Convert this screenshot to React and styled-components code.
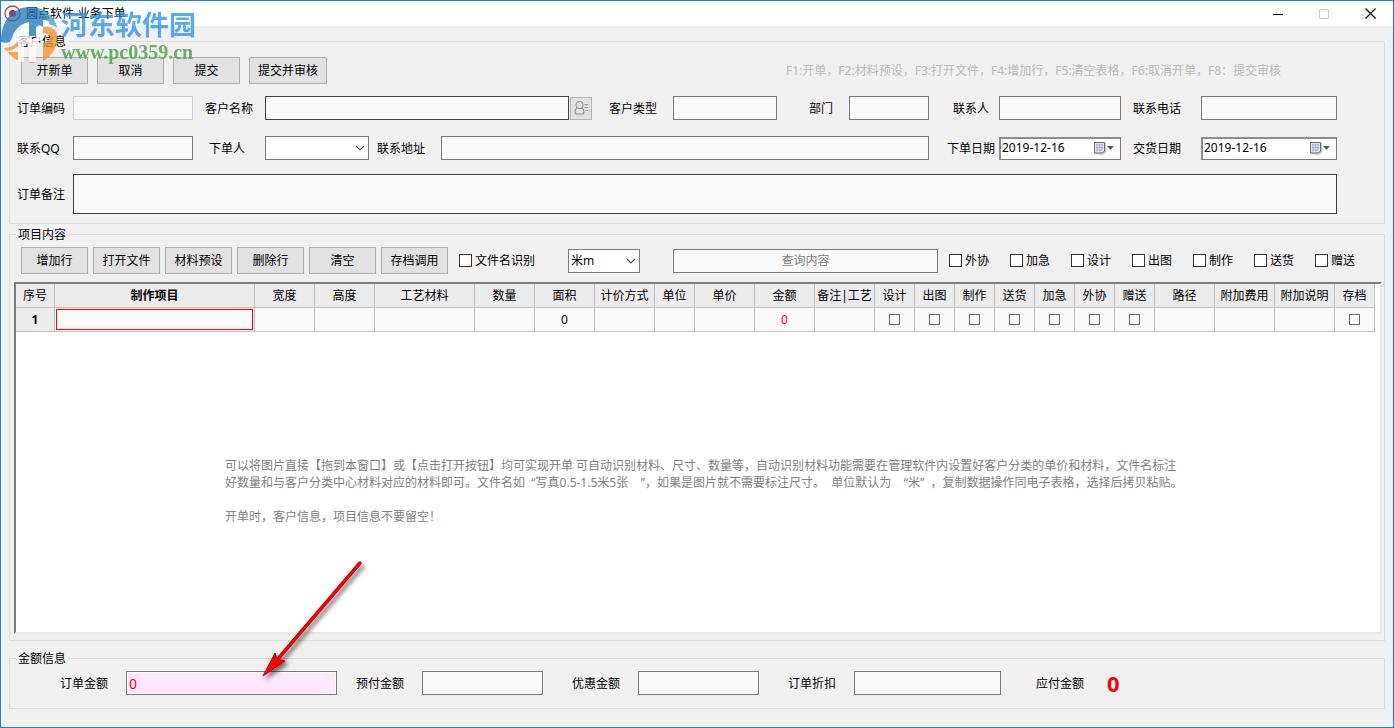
import React from 'react';
import styled, { createGlobalStyle, css } from 'styled-components';

const GlobalStyle = createGlobalStyle`
  *, *::before, *::after { box-sizing: border-box; }
  body { margin: 0; }
  body, button, input, select, textarea {
    font-family: "Noto Sans", "Noto Sans CJK SC", sans-serif;
    font-size: 12px;
    line-height: 17px;
    color: #000;
  }
  p { margin: 0; }
`;

const AppWindow = styled.div`
  position: relative;
  display: flex;
  flex-direction: column;
  min-width: 1240px;
  min-height: 100vh;
  border: 1px solid #1883d7;
  background: #f0f0f0;
`;

const TitleBar = styled.header`
  display: flex;
  align-items: center;
  height: 25px;
  padding-left: 3px;
  background: #fff;
`;

const TitleText = styled.h1`
  flex: 1;
  margin: 0 0 0 5px;
  font-size: 12px;
  font-weight: 400;
`;

const CaptionButton = styled.button`
  display: flex;
  align-items: center;
  justify-content: center;
  width: 46px;
  height: 25px;
  padding: 0;
  border: 0;
  background: transparent;
`;

const Content = styled.main`
  display: flex;
  flex: 1;
  flex-direction: column;
  padding: 7px 8px 18px;
`;

const Group = styled.fieldset`
  display: flex;
  flex-direction: column;
  flex: ${(p) => (p.$grow ? '1' : 'none')};
  min-width: 0;
  margin: 0 0 ${(p) => p.$after || 0}px;
  padding: ${(p) => p.$pad};
  border: 1px solid #dcdcdc;
`;

const GroupTitle = styled.legend`
  margin-left: ${(p) => p.$indent}px;
  padding: 0 2px;
  line-height: 17px;
`;

const ButtonBar = styled.div`
  display: flex;
  align-items: center;
  gap: ${(p) => p.$gap}px;
  padding-left: ${(p) => p.$indent}px;
`;

const PushButton = styled.button`
  width: ${(p) => (p.$wide ? 78 : 67)}px;
  height: 27px;
  padding: 0;
  border: 1px solid #adadad;
  background: #e1e1e1;
  white-space: nowrap;
`;

const ShortcutHint = styled.p`
  margin-left: auto;
  padding-right: 56px;
  color: #b8b8b8;
  white-space: nowrap;
`;

const FormGrid = styled.div`
  display: grid;
  grid-template-columns: 176px minmax(200px, 1fr) 173px 140px 180px 204px;
  column-gap: 12px;
  row-gap: 16px;
  margin-top: 12px;
`;

const FieldBox = styled.div`
  display: flex;
  align-items: center;
  min-width: 0;
  flex: ${(p) => (p.$grow ? '1' : 'none')};
  grid-column: ${(p) => p.$span || 'auto'};
  margin-right: ${(p) => p.$after || 0}px;
`;

const FieldLabel = styled.label`
  flex: none;
  width: ${(p) => p.$w}px;
  padding-right: ${(p) => p.$gap || 0}px;
  text-align: ${(p) => (p.$gap ? 'right' : 'left')};
  white-space: nowrap;
`;

const toneColors = { normal: '#7a7a7a', strong: '#404040', off: '#cccccc' };

const TextInput = styled.input`
  flex: ${(p) => (p.$w ? 'none' : '1')};
  width: ${(p) => (p.$w ? p.$w + 'px' : 'auto')};
  min-width: 0;
  height: 24px;
  padding: 0 2px;
  border: 1px solid ${(p) => toneColors[p.$tone || 'normal']};
  border-radius: 0;
  background: #f9f9f9;
  outline: 0;
  text-align: ${(p) => (p.$center ? 'center' : 'left')};
  &::placeholder { color: #808080; opacity: 1; }
  ${(p) => p.$amount && css`
    background: #ffe6ff;
    box-shadow: inset 0 0 0 1px #fff;
    color: #f00;
    font-size: 14px;
  `}
`;

const RemarkRow = styled.div`
  display: flex;
  align-items: center;
  margin-top: 14px;
`;

const RemarkArea = styled.textarea`
  display: block;
  flex: 1;
  height: 40px;
  padding: 2px;
  border: 1px solid #404040;
  border-radius: 0;
  background: #f9f9f9;
  outline: 0;
  resize: none;
`;

const LookupButton = styled.button`
  display: flex;
  align-items: center;
  justify-content: center;
  width: 22px;
  height: 23px;
  margin-left: 1px;
  padding: 0;
  border: 1px solid #b4b4b4;
  background: #e1e1e1;
`;

const SelectBox = styled.div`
  position: relative;
  flex: none;
  width: ${(p) => p.$w}px;
  height: 24px;
  svg {
    position: absolute;
    right: 4px;
    top: 9px;
    pointer-events: none;
  }
`;

const SelectControl = styled.select`
  width: 100%;
  height: 100%;
  padding: 0 2px;
  border: 1px solid #7a7a7a;
  border-radius: 0;
  background: #fff;
  outline: 0;
  appearance: none;
`;

const DateBox = styled.div`
  display: flex;
  align-items: center;
  flex: 1;
  min-width: 0;
  height: 23px;
  padding: 0 5px 2px 0;
  border: 1px solid #7a7a7a;
  border-top-width: 2px;
  border-left-width: 2px;
  border-color: #8c8c8c #7a7a7a #7a7a7a #8c8c8c;
  background: #fff;
`;

const DateInput = styled.input`
  flex: 1;
  min-width: 0;
  padding: 0 0 0 1px;
  border: 0;
  background: transparent;
  outline: 0;
`;

const DateButton = styled.button`
  display: flex;
  padding: 0;
  border: 0;
  background: transparent;
`;

const ItemTools = styled.div`
  display: flex;
  align-items: center;
  padding: 0 27px 0 7px;
`;

const SearchWrap = styled.div`
  display: flex;
  flex: 1;
  min-width: 120px;
  margin: 0 11px 0 33px;
`;

const CheckGroup = styled.div`
  display: flex;
  gap: 21px;
`;

const CheckLabel = styled.label`
  display: flex;
  align-items: center;
  gap: 3px;
  margin: 0 ${(p) => p.$after || 0}px 0 ${(p) => p.$before || 0}px;
  white-space: nowrap;
`;

const Tick = styled.input`
  appearance: none;
  flex: none;
  display: block;
  width: ${(p) => (p.$small ? 11 : 13)}px;
  height: ${(p) => (p.$small ? 11 : 13)}px;
  margin: ${(p) => (p.$small ? '0 auto' : '0')};
  border: 1px solid ${(p) => (p.$small ? '#666' : '#333')};
  background: #fff;
  &:checked { background: #333; box-shadow: inset 0 0 0 2px #fff; }
`;

const GridPanel = styled.div`
  min-height: calc(100vh - 376px);
  margin-top: 8px;
  padding-right: 5px;
  border: 2px solid;
  border-color: #7d7d7d #e8e8e8 #e8e8e8 #7d7d7d;
  background: #fff;
`;

const ItemTable = styled.table`
  width: 100%;
  table-layout: fixed;
  border-collapse: separate;
  border-spacing: 0;
`;

const cell = css`
  height: 24px;
  padding: 0;
  border-right: 1px solid #c0c0c0;
  border-bottom: 1px solid #c0c0c0;
  text-align: center;
  white-space: nowrap;
  overflow: hidden;
`;

const HeadCell = styled.th`
  ${cell}
  background: #ebebeb;
  font-weight: ${(p) => (p.$bold ? 700 : 400)};
`;

const DataCell = styled.td`
  ${cell}
  background: #f9f9f9;
  color: ${(p) => (p.$red ? '#f00' : '#000')};
`;

const EditCell = styled.td`
  ${cell}
  padding: 1px;
  background: #f9f9f9;
`;

const CellInput = styled.input`
  display: block;
  width: 100%;
  height: 21px;
  padding: 0 2px;
  border: 1px solid #f00;
  border-radius: 0;
  background: #f9f9f9;
  outline: 0;
`;

const Notes = styled.div`
  padding: 125px 0 0 209px;
  color: #808080;
  p { min-height: 17px; white-space: pre; }
`;

const TotalsRow = styled.div`
  display: flex;
  align-items: center;
  height: 24px;
`;

const DueAmount = styled.output`
  font-size: 22px;
  line-height: 24px;
  font-weight: 700;
  color: #f00;
`;

const Watermark = styled.div`
  position: absolute;
  left: 0;
  top: 4px;
  display: flex;
  pointer-events: none;
  opacity: 0.76;
`;

const WatermarkText = styled.div`
  display: flex;
  flex-direction: column;
  margin: 3px 0 0 3px;
`;

const SiteName = styled.span`
  font-size: 27px;
  line-height: 34px;
  font-weight: 700;
  color: #2590ee;
  white-space: nowrap;
`;

const SiteAddress = styled.span`
  font-family: "Liberation Serif", serif;
  font-size: 20px;
  line-height: 20px;
  font-weight: 700;
  color: #3c9f33;
`;

const Pointer = styled.svg`
  position: absolute;
  left: 254px;
  bottom: 42px;
  pointer-events: none;
`;

function Chevron() {
  return (
    <svg width="10" height="7" viewBox="0 0 10 7" fill="none" stroke="#555" strokeWidth="1.2">
      <path d="M1 1l4 4 4-4" />
    </svg>
  );
}

function CalendarIcon() {
  return (
    <svg width="22" height="14" viewBox="0 0 22 14">
      <path d="M2 2h11v9.500l-2 2H2z" fill="#9a9aa0" opacity=".5" />
      <path d="M1.500 1.500H11.500V10L9.500 12H1.500z" fill="#dfe6f2" stroke="#75666a" />
      <path d="M3 4h7M3 6.500h7M3 9h6M4 3v8M6.500 3v8M9 3v7" stroke="#9aabc6" strokeWidth=".8" />
      <path d="M14 5h7l-3.500 4z" fill="#3d5f8e" />
    </svg>
  );
}

function PersonIcon() {
  return (
    <svg width="15" height="16" viewBox="0 0 15 16" fill="none" stroke="#8e8e8e" strokeWidth="1.100">
      <circle cx="5.500" cy="5" r="3.500" />
      <path d="M3.200 7.700C1.500 8.700 1 10 1 12c0 1.500 1 2 2 2h5c1.200 0 2-.5 2-2 0-2-.5-3.300-2.200-4.300M10.500 4.500H14M10.500 7.500H14M11.500 10.500H14" />
    </svg>
  );
}

function AppIcon() {
  return (
    <svg width="17" height="17" viewBox="0 0 17 17">
      <circle cx="8.500" cy="8.500" r="7.500" fill="#fff" stroke="#df3340" strokeWidth="1.300" />
      <circle cx="8.500" cy="8.500" r="3.500" fill="#c8283a" />
    </svg>
  );
}

function SiteLogo() {
  return (
    <svg width="57" height="60" viewBox="0 0 57 60">
      <path d="M0 37C0 15 12 2 29 2c14 0 24 9 27 21-4-6-9-8-14-8v7c-3-2-5-2-7 0v9h-7V17c-9 2-15 8-17 16-1 4-5 6-11 4z" fill="#1c78b8" />
      <path d="M56 22C54 12 45 4 34 3c9 4 14 9 14 16z" fill="#3d9bd2" />
      <path d="M3 43c7 0 12-3 14-8l4-4v11h-5c-4 3-8 4-11 4zM7 47h14v10C15 55 10 52 7 47zM28 36h7v20c0 1-1 2-3 2h-4zM42 22c7-1 12 2 14 6 1 13-4 23-14 28V38l5-2c3-3 3-7-5-8z" fill="#f29225" />
      <path d="M21 22h7v12h7V22h7v12l-5 3h-2v20h-7V39h-5v18h-6V37H9c5-2 9-8 12-15z" fill="#fff" />
    </svg>
  );
}

function Field({ id, label, labelWidth, gap, width, grow, span, after, tone, children, ...rest }) {
  return (
    <FieldBox $grow={grow} $span={span} $after={after}>
      <FieldLabel htmlFor={id} $w={labelWidth} $gap={gap}>{label}</FieldLabel>
      {children || <TextInput id={id} type="text" $w={width} $tone={tone} {...rest} />}
    </FieldBox>
  );
}

function Select({ id, width, options, ...rest }) {
  return (
    <SelectBox $w={width}>
      <SelectControl id={id} {...rest}>
        {options.map((o) => <option key={o} value={o}>{o}</option>)}
      </SelectControl>
      <Chevron />
    </SelectBox>
  );
}

function DateField({ id, label }) {
  return (
    <DateBox>
      <DateInput id={id} type="text" defaultValue="2019-12-16" />
      <DateButton type="button" aria-label={label}><CalendarIcon /></DateButton>
    </DateBox>
  );
}

const columns = [
  ['序号', 39], ['制作项目', null], ['宽度', 60], ['高度', 60], ['工艺材料', 100], ['数量', 60],
  ['面积', 60], ['计价方式', 60], ['单位', 40], ['单价', 60], ['金额', 60], ['备注|工艺', 60],
  ['设计', 40], ['出图', 40], ['制作', 40], ['送货', 40], ['加急', 40], ['外协', 40], ['赠送', 40],
  ['路径', 60], ['附加费用', 60], ['附加说明', 60], ['存档', 40],
];
const tickColumns = ['设计', '出图', '制作', '送货', '加急', '外协', '赠送', '存档'];
const itemButtons = ['增加行', '打开文件', '材料预设', '删除行', '清空', '存档调用'];
const filters = ['外协', '加急', '设计', '出图', '制作', '送货', '赠送'];
const notes = [
  '可以将图片直接【拖到本窗口】或【点击打开按钮】均可实现开单 可自动识别材料、尺寸、数量等，自动识别材料功能需要在管理软件内设置好客户分类的单价和材料，文件名标注',
  '好数量和与客户分类中心材料对应的材料即可。文件名如  “写真0.5-1.5米5张    ”，如果是图片就不需要标注尺寸。  单位默认为    “米”  ，复制数据操作同电子表格，选择后拷贝粘贴。',
  '',
  '开单时，客户信息，项目信息不要留空！',
];

function ItemRow() {
  return (
    <tr>
      {columns.map(([name]) => {
        if (name === '序号') return <HeadCell key={name} scope="row" $bold>1</HeadCell>;
        if (name === '制作项目') return <EditCell key={name}><CellInput type="text" aria-label={name} /></EditCell>;
        if (tickColumns.includes(name)) {
          return <DataCell key={name}><Tick type="checkbox" $small aria-label={name} /></DataCell>;
        }
        const total = name === '金额';
        return <DataCell key={name} $red={total}>{total || name === '面积' ? '0' : ''}</DataCell>;
      })}
    </tr>
  );
}

export default function App() {
  return (
    <>
      <GlobalStyle />
      <AppWindow>
        <TitleBar>
          <AppIcon />
          <TitleText>圆点软件-业务下单</TitleText>
          <CaptionButton type="button" aria-label="最小化">
            <svg width="10" height="10" viewBox="0 0 10 10"><path d="M0 5.500h10" stroke="#000" /></svg>
          </CaptionButton>
          <CaptionButton type="button" aria-label="最大化" disabled>
            <svg width="10" height="10" viewBox="0 0 10 10"><path d="M.5.5h9v9h-9z" fill="none" stroke="#ccc" /></svg>
          </CaptionButton>
          <CaptionButton type="button" aria-label="关闭">
            <svg width="11" height="11" viewBox="0 0 11 11"><path d="M.5.5l10 10M10.500.5l-10 10" stroke="#000" strokeWidth="1.100" /></svg>
          </CaptionButton>
        </TitleBar>

        <Content>
          <Group $after={2} $pad="7px 47px 9px 7px">
            <GroupTitle $indent={-1}>客户信息</GroupTitle>
            <ButtonBar $gap={9} $indent={4}>
              <PushButton type="button">开新单</PushButton>
              <PushButton type="button">取消</PushButton>
              <PushButton type="button">提交</PushButton>
              <PushButton type="button" $wide>提交并审核</PushButton>
              <ShortcutHint>F1:开单，F2:材料预设，F3:打开文件，F4:增加行，F5:清空表格，F6:取消开单，F8：提交审核</ShortcutHint>
            </ButtonBar>
            <FormGrid>
              <Field id="code" label="订单编码" labelWidth={56} tone="off" disabled />
              <Field id="customer" label="客户名称" labelWidth={60}>
                <TextInput id="customer" type="text" $tone="strong" />
                <LookupButton type="button" aria-label="选择客户"><PersonIcon /></LookupButton>
              </Field>
              <Field id="type" label="客户类型" labelWidth={69} gap={16} />
              <Field id="dept" label="部门" labelWidth={60} gap={16} />
              <Field id="contact" label="联系人" labelWidth={58} gap={10} />
              <Field id="phone" label="联系电话" labelWidth={68} />

              <Field id="qq" label="联系QQ" labelWidth={56} />
              <FieldBox $span="2 / span 3">
                <Field id="clerk" label="下单人" labelWidth={60} gap={20} after={8}>
                  <Select id="clerk" width={104} options={['']} />
                </Field>
                <Field id="address" label="联系地址" labelWidth={64} grow />
              </FieldBox>
              <Field id="ordered" label="下单日期" labelWidth={58} gap={4}>
                <DateField id="ordered" label="选择下单日期" />
              </Field>
              <Field id="due" label="交货日期" labelWidth={68}>
                <DateField id="due" label="选择交货日期" />
              </Field>
            </FormGrid>
            <RemarkRow>
              <FieldLabel htmlFor="remark" $w={56}>订单备注</FieldLabel>
              <RemarkArea id="remark" />
            </RemarkRow>
          </Group>

          <Group $grow $after={9} $pad="4px 2px 6px 4px">
            <GroupTitle $indent={2}>项目内容</GroupTitle>
            <ItemTools>
              <ButtonBar $gap={5} $indent={0}>
                {itemButtons.map((b) => <PushButton key={b} type="button">{b}</PushButton>)}
              </ButtonBar>
              <CheckLabel $before={11} $after={33}>
                <Tick type="checkbox" />文件名识别
              </CheckLabel>
              <Select width={72} options={['米m']} aria-label="单位" />
              <SearchWrap>
                <TextInput type="text" placeholder="查询内容" aria-label="查询内容" $center />
              </SearchWrap>
              <CheckGroup>
                {filters.map((f) => (
                  <CheckLabel key={f}><Tick type="checkbox" />{f}</CheckLabel>
                ))}
              </CheckGroup>
            </ItemTools>
            <GridPanel>
              <ItemTable>
                <colgroup>
                  {columns.map(([name, w]) => <col key={name} width={w || undefined} />)}
                </colgroup>
                <thead>
                  <tr>
                    {columns.map(([name]) => (
                      <HeadCell key={name} scope="col" $bold={name === '制作项目'}>{name}</HeadCell>
                    ))}
                  </tr>
                </thead>
                <tbody><ItemRow /></tbody>
              </ItemTable>
              <Notes>
                {notes.map((line, i) => <p key={i}>{line}</p>)}
              </Notes>
            </GridPanel>
          </Group>

          <Group $pad="4px 12px 13px 50px">
            <GroupTitle $indent={-44}>金额信息</GroupTitle>
            <TotalsRow>
              <Field id="total" label="订单金额" labelWidth={66} width={211} after={19} defaultValue="0" $amount />
              <Field id="prepaid" label="预付金额" labelWidth={66} width={121} after={29} />
              <Field id="discount" label="优惠金额" labelWidth={66} width={121} after={29} />
              <Field id="rate" label="订单折扣" labelWidth={66} width={147} after={35} />
              <Field id="payable" label="应付金额" labelWidth={71}>
                <DueAmount id="payable">0</DueAmount>
              </Field>
            </TotalsRow>
          </Group>
        </Content>

        <Watermark>
          <SiteLogo />
          <WatermarkText>
            <SiteName>河东软件园</SiteName>
            <SiteAddress>www.pc0359.cn</SiteAddress>
          </WatermarkText>
        </Watermark>

        <Pointer width="116" height="130" viewBox="0 0 116 130" aria-hidden="true">
          <defs>
            <filter id="arrowShadow" x="-20%" y="-20%" width="150%" height="150%">
              <feDropShadow dx="3" dy="3" stdDeviation="2" floodColor="#000" floodOpacity=".55" />
            </filter>
          </defs>
          <g filter="url(#arrowShadow)">
            <path d="M105 8L22 105" stroke="#c40000" strokeWidth="3.500" strokeLinecap="round" />
            <path d="M105 8L22 105" stroke="#f00" strokeWidth="2" strokeLinecap="round" />
            <path d="M8 121l12-23 2 6 8 2z" fill="#f00" stroke="#c40000" />
          </g>
        </Pointer>
      </AppWindow>
    </>
  );
}
